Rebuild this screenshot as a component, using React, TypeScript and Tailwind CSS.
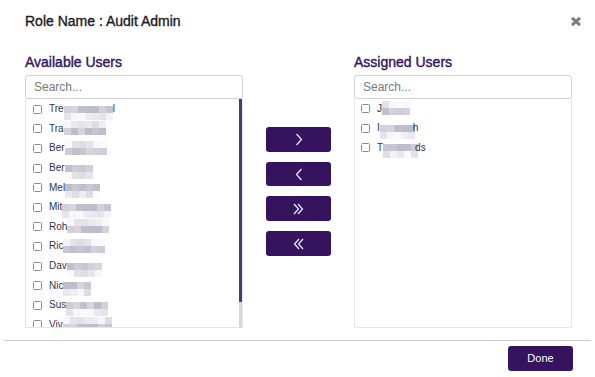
import React from "react";

const top = ["#c8c5d2", "#cfcbd8", "#d9d4da", "#b9bdcc", "#cbc7d1", "#c2bfcd", "#d4d0da", "#bfbccb"];
const bot = ["#e6e4ea", "#eeedf1", "#f3f2f5", "#e3e2e9", "#f7f7f9", "#ebe9ef", "#dedde5", "#fafafb"];

function Mosaic({ w, seed, flip }: { w: number; seed: number; flip?: boolean }) {
  const cols = Math.ceil(w / 7);
  const a = flip ? bot : top;
  const b = flip ? top : bot;
  return (
    <span className="inline-flex flex-col" style={{ width: w }}>
      {[a, b].map((pal, r) => (
        <span key={r} className="flex h-[7px]">
          {Array.from({ length: cols }).map((_, c) => {
            const idx = (seed * 5 + c * 3 + r * 2 + ((c * c + seed) % 3)) % pal.length;
            return <span key={c} className="h-[7px] w-[7px] shrink-0" style={{ background: pal[idx] }} />;
          })}
        </span>
      ))}
    </span>
  );
}

function Check() {
  return <span className="block h-[9px] w-[9px] shrink-0 rounded-[1.5px] border border-[#8c8c8c] bg-white" />;
}

type Row = { pre: string; w: number; post?: string; flip?: boolean };

const available: Row[] = [
  { pre: "Tre", w: 49, post: "l" },
  { pre: "Tra", w: 42, flip: true },
  { pre: "Ber", w: 42, flip: true },
  { pre: "Ber", w: 28 },
  { pre: "Mel", w: 35 },
  { pre: "Mit", w: 49 },
  { pre: "Roh", w: 42, flip: true },
  { pre: "Ric", w: 42, flip: true },
  { pre: "Dav", w: 35 },
  { pre: "Nic", w: 28 },
  { pre: "Sus", w: 42 },
  { pre: "Viv", w: 49, flip: true },
];

const assigned: Row[] = [
  { pre: "J", w: 28, flip: true },
  { pre: "I", w: 33, post: "h" },
  { pre: "T", w: 32, post: "ds" },
];

function UserRow({ r, i, pl }: { r: Row; i: number; pl: string }) {
  return (
    <div className={`flex h-[19.6px] shrink-0 items-center ${pl}`}>
      <Check />
      <span className="ml-[7px] flex items-center text-[10px] leading-none text-[#2f3350]">
        <span>{r.pre}</span>
        <span className={r.flip ? "-mt-[2px]" : "mt-[6px]"}>
          <Mosaic w={r.w} seed={i + 1} flip={r.flip} />
        </span>
        {r.post && <span>{r.post}</span>}
      </span>
    </div>
  );
}

function Chevron({ dir, double }: { dir: "r" | "l"; double?: boolean }) {
  const single = dir === "r" ? "M1.5 1 L6.5 6.5 L1.5 12" : "M6.5 1 L1.5 6.5 L6.5 12";
  if (!double) {
    return (
      <svg width="8" height="13" viewBox="0 0 8 13" fill="none">
        <path d={single} stroke="#e4e6ff" strokeWidth="1.3" />
      </svg>
    );
  }
  const d =
    dir === "r"
      ? "M1 1 L5.5 6 L1 11 M5 1 L9.5 6 L5 11"
      : "M10 1 L5.5 6 L10 11 M6 1 L1.5 6 L6 11";
  return (
    <svg width="11" height="12" viewBox="0 0 11 12" fill="none">
      <path d={d} stroke="#e4e6ff" strokeWidth="1.3" />
    </svg>
  );
}

function Search() {
  return (
    <div className="flex h-[24px] items-center rounded-[3px] border border-[#cfd3d8] bg-white px-[8px]">
      <span className="text-[12px] text-[#7a7a7a]">Search...</span>
    </div>
  );
}

export default function App() {
  return (
    <div
      className="relative h-[377px] w-[595px] overflow-hidden bg-white"
      style={{ fontFamily: "'Liberation Sans', Arial, sans-serif" }}
    >
      <div className="mt-[12px] flex h-[18px] items-center justify-between pl-[25px] pr-[13px]">
        <span className="text-[14px] text-[#1a1a1a] [-webkit-text-stroke:0.35px_#1a1a1a]">Role Name : Audit Admin</span>
        <svg width="12" height="11" viewBox="0 0 12 11">
          <path d="M2 1.8 L10 9.2 M10 1.8 L2 9.2" stroke="#7d7d7d" strokeWidth="3" />
        </svg>
      </div>

      <div className="mt-[23px] flex pl-[25px]">
        <div className="flex w-[218px] flex-col">
          <div className="mb-[4px] flex h-[18px] items-center text-[14px] text-[#30175e] [-webkit-text-stroke:0.4px_#30175e]">
            Available Users
          </div>
          <Search />
          <div className="flex h-[229px] border border-t-0 border-[#e6e6e6]">
            <div className="flex flex-1 flex-col overflow-hidden pt-[0.5px]">
              {available.map((r, i) => (
                <UserRow key={i} r={r} i={i} pl="pl-[7px]" />
              ))}
            </div>
            <div className="flex w-[3px] flex-col">
              <div className="h-[203px] bg-[#4d3b6e]" />
              <div className="flex-1 bg-[#d6d6d6]" />
            </div>
          </div>
        </div>

        <div className="ml-[23px] flex w-[65px] flex-col gap-[10px] pt-[74px]">
          <button className="flex h-[25px] items-center justify-center rounded-[3px] bg-[#35135f]">
            <Chevron dir="r" />
          </button>
          <button className="flex h-[24px] items-center justify-center rounded-[3px] bg-[#35135f]">
            <Chevron dir="l" />
          </button>
          <button className="flex h-[25px] items-center justify-center rounded-[3px] bg-[#35135f]">
            <Chevron dir="r" double />
          </button>
          <button className="flex h-[25px] items-center justify-center rounded-[3px] bg-[#35135f]">
            <Chevron dir="l" double />
          </button>
        </div>

        <div className="ml-[23px] flex w-[218px] flex-col">
          <div className="mb-[4px] flex h-[18px] items-center text-[14px] text-[#30175e] [-webkit-text-stroke:0.4px_#30175e]">
            Assigned Users
          </div>
          <Search />
          <div className="flex h-[229px] flex-col border border-t-0 border-[#e6e6e6]">
            {assigned.map((r, i) => (
              <UserRow key={i} r={r} i={i + 4} pl="pl-[6px]" />
            ))}
          </div>
        </div>
      </div>

      <div className="mx-[4px] mt-[12px] h-[1px] bg-[#cccccc]" />
      <div className="mt-[5px] flex justify-end pr-[22px]">
        <button className="flex h-[25px] w-[65px] items-center justify-center rounded-[3px] bg-[#35135f] text-[11px] text-white">
          Done
        </button>
      </div>
    </div>
  );
}
